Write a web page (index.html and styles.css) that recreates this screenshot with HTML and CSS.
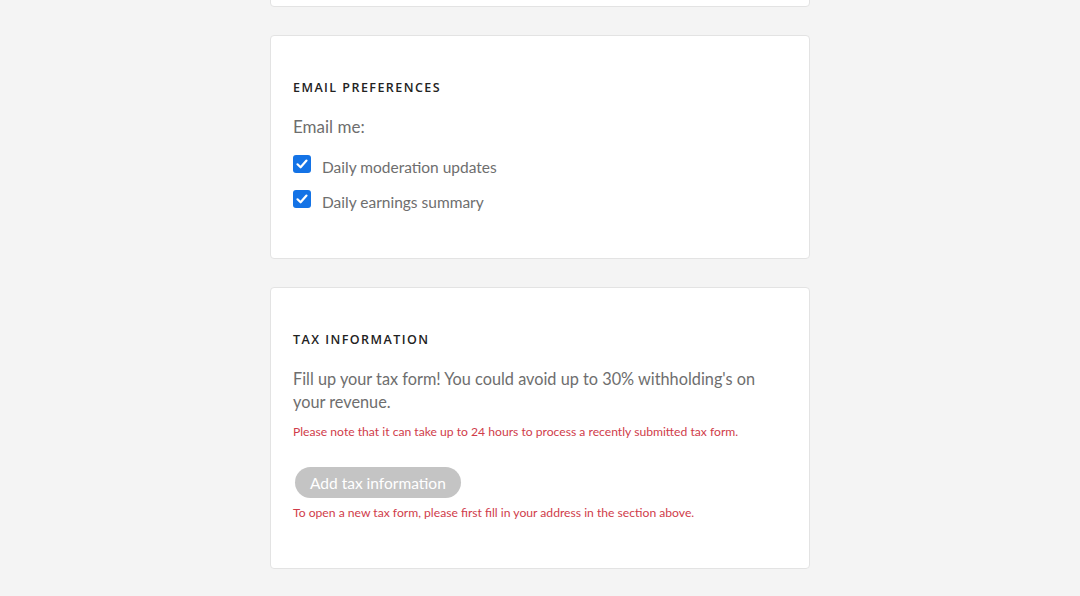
FILE: index.html
```html
<!DOCTYPE html>
<html>
<head>
<meta charset="utf-8">
<link rel="stylesheet" href="styles.css">
</head>
<body>
<div class="page">
  <section class="card card-partial"></section>
  <section class="card card-email">
    <h2 class="card-title">EMAIL PREFERENCES</h2>
    <p class="lead">Email me:</p>
    <label class="check"><span class="box"><svg viewBox="0 0 18 18" width="18" height="18"><path d="M4.5 9.3 L7.6 12.3 L13.5 5.6" fill="none" stroke="#fff" stroke-width="2.2" stroke-linecap="round" stroke-linejoin="round"/></svg></span><span class="check-label">Daily moderation updates</span></label>
    <label class="check"><span class="box"><svg viewBox="0 0 18 18" width="18" height="18"><path d="M4.5 9.3 L7.6 12.3 L13.5 5.6" fill="none" stroke="#fff" stroke-width="2.2" stroke-linecap="round" stroke-linejoin="round"/></svg></span><span class="check-label">Daily earnings summary</span></label>
  </section>
  <section class="card card-tax">
    <h2 class="card-title">TAX INFORMATION</h2>
    <p class="tax-text">Fill up your tax form! You could avoid up to 30% withholding's on your revenue.</p>
    <p class="note">Please note that it can take up to 24 hours to process a recently submitted tax form.</p>
    <button class="btn" disabled>Add tax information</button>
    <p class="note note-after">To open a new tax form, please first fill in your address in the section above.</p>
  </section>
</div>
</body>
</html>
```
FILE: styles.css
```css
* { box-sizing: border-box; }
html, body { margin: 0; padding: 0; }
body {
  background: #f4f4f4;
  font-family: "Lato", "Open Sans", sans-serif;
  color: #6e6e6e;
}
.page {
  width: 540px;
  margin: -30px auto 0 270px;
  display: flex;
  flex-direction: column;
  gap: 28px;
}
.card {
  background: #fff;
  border: 1px solid #e3e3e3;
  border-radius: 4px;
  padding: 44px 22px 46px;
}
.card-partial { height: 37px; padding: 0; }
.card-email { padding-bottom: 48px; }
.card-title {
  margin: 0;
  font-family: "Open Sans", sans-serif;
  font-size: 12.5px;
  font-weight: 600;
  letter-spacing: 1.45px;
  color: #222;
  line-height: 16px;
}
.lead {
  margin: 20px 0 0;
  font-size: 17px;
  line-height: 22px;
}
.check {
  display: flex;
  align-items: center;
  margin-top: 15px;
  height: 22px;
}
.check + .check { margin-top: 13px; }
.box {
  width: 18px;
  height: 18px;
  border-radius: 3px;
  background: #1473e6;
  display: flex;
  margin-right: 11px;
}
.check-label {
  font-size: 15.5px;
  line-height: 20px;
  margin-top: 5px;
}
.card-tax { padding-bottom: 47px; }
.tax-text {
  margin: 19px 0 0;
  font-size: 16.3px;
  line-height: 23px;
}
.note {
  margin: 11px 0 0;
  font-size: 12.15px;
  line-height: 16px;
  color: #d03c4a;
}
.btn {
  margin: 27px 0 0 2px;
  height: 31px;
  padding: 0 15px;
  border: none;
  border-radius: 16px;
  background: #c4c4c4;
  color: #fff;
  font-family: inherit;
  font-size: 15.5px;
}
.note-after { margin-top: 7px; }
```
